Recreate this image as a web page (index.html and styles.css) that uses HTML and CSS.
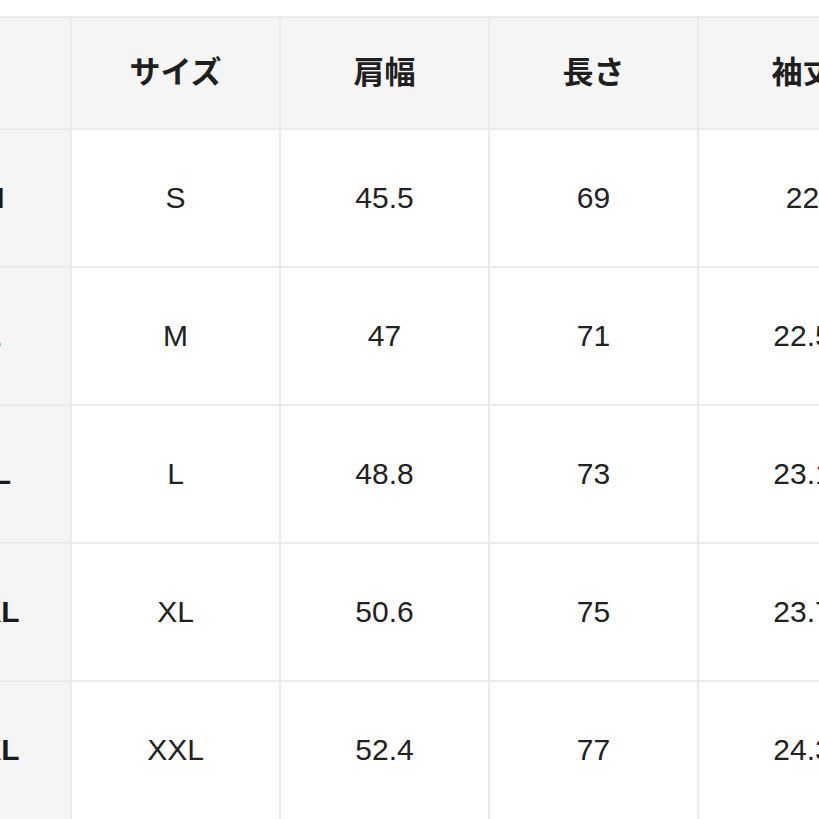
FILE: index.html
```html
<!DOCTYPE html>
<html lang="ja">
<head>
<meta charset="utf-8">
<link rel="stylesheet" href="styles.css">
</head>
<body>
<div class="frame">
<table class="size-table">
  <colgroup>
    <col class="c-label"><col class="c-data"><col class="c-data"><col class="c-data"><col class="c-data">
  </colgroup>
  <thead>
    <tr><th class="corner"></th><th>サイズ</th><th>肩幅</th><th>長さ</th><th>袖丈</th></tr>
  </thead>
  <tbody>
    <tr><th class="label">M</th><td>S</td><td>45.5</td><td>69</td><td>22</td></tr>
    <tr><th class="label">L</th><td>M</td><td>47</td><td>71</td><td>22.5</td></tr>
    <tr><th class="label">XL</th><td>L</td><td>48.8</td><td>73</td><td>23.1</td></tr>
    <tr><th class="label">2XL</th><td>XL</td><td>50.6</td><td>75</td><td>23.7</td></tr>
    <tr class="last"><th class="label">3XL</th><td>XXL</td><td>52.4</td><td>77</td><td>24.3</td></tr>
  </tbody>
</table>
</div>
</body>
</html>
```
FILE: styles.css
```css
html, body {
  margin: 0;
  padding: 0;
  background: #ffffff;
  overflow: hidden;
}
.frame {
  padding-top: 16px;
  width: 819px;
  height: 803px;
  overflow: hidden;
}
.size-table {
  margin-left: -88px;
  border-collapse: collapse;
  table-layout: fixed;
  width: 994px;
  font-family: "Liberation Sans", Arial, "Noto Sans CJK JP", sans-serif;
  color: #222222;
}
.c-label { width: 158px; }
.c-data { width: 209px; }
.size-table th,
.size-table td {
  border: 2px solid #ebebeb;
  text-align: center;
  vertical-align: middle;
  padding: 0;
}
.size-table thead th {
  height: 112px;
  box-sizing: border-box;
  padding-bottom: 7px;
  background: #f5f5f5;
  font-family: "Noto Sans CJK JP", sans-serif;
  font-weight: 700;
  font-size: 31px;
  color: #1f1f1f;
}
.size-table tbody td,
.size-table tbody th {
  height: 136px;
  font-size: 30px;
  font-weight: 400;
}
.size-table tbody tr.last td,
.size-table tbody tr.last th {
  border-bottom: 0;
  padding-bottom: 4px;
  height: 136px;
}
.size-table tbody th.label {
  background: #f5f5f5;
  font-weight: 700;
  color: #1a1a1a;
}
.size-table tbody td {
  background: #ffffff;
}
```
